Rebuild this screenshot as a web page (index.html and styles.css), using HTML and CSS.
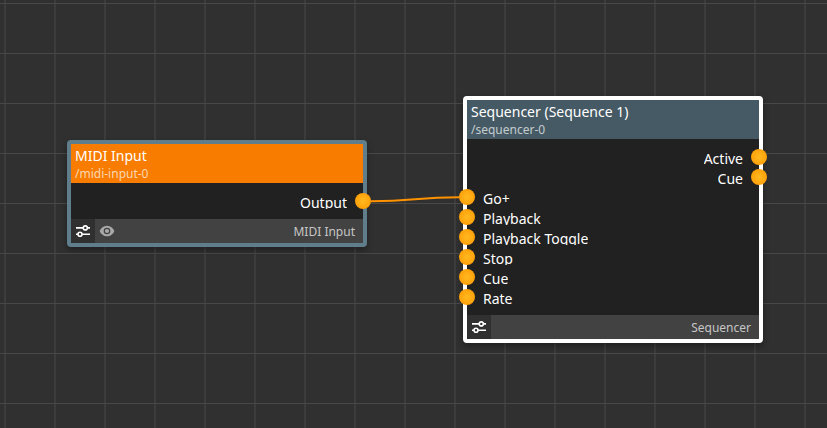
FILE: index.html
```
<!DOCTYPE html>
<html lang="en">
<head>
<meta charset="utf-8">
<title>Node editor</title>
<link rel="stylesheet" href="styles.css">
</head>
<body>
<svg class="symbols" aria-hidden="true">
  <symbol id="sliders" viewBox="0 0 16 16">
    <g fill="none" stroke="currentColor" stroke-width="1.600">
      <path d="M1 4.900h7M12.400 4.900H15M1 11.300h1.800M7.200 11.300H15"/>
      <circle cx="10.300" cy="4.900" r="2"/>
      <circle cx="5" cy="11.300" r="2"/>
    </g>
  </symbol>
  <symbol id="eye" viewBox="0 0 16 16">
    <path fill="currentColor" fill-rule="evenodd" d="M8 2.700C4.600 2.700 1.800 4.900.6 8c1.200 3.100 4 5.300 7.400 5.300s6.200-2.200 7.400-5.300C14.200 4.900 11.400 2.700 8 2.700zm0 8.600a3.300 3.300 0 1 1 0-6.600 3.300 3.300 0 0 1 0 6.600zM8 5.900a2.100 2.100 0 1 0 0 4.200 2.100 2.100 0 0 0 0-4.200z"/>
  </symbol>
</svg>
<main class="canvas">
  <section class="node midi">
    <header class="head">
      <div class="title">MIDI Input</div>
      <div class="path">/midi-input-0</div>
    </header>
    <div class="ports">
      <div class="port out"><span class="label">Output</span><i class="dot"></i></div>
    </div>
    <footer class="foot">
      <span class="tool settings"><svg><use href="#sliders"/></svg></span>
      <span class="tool view"><svg><use href="#eye"/></svg></span>
      <span class="type">MIDI Input</span>
    </footer>
  </section>
  <section class="node sequencer">
    <header class="head">
      <div class="title">Sequencer (Sequence 1)</div>
      <div class="path">/sequencer-0</div>
    </header>
    <div class="ports">
      <div class="port out"><span class="label">Active</span><i class="dot"></i></div>
      <div class="port out"><span class="label">Cue</span><i class="dot"></i></div>
      <div class="port"><i class="dot"></i><span class="label">Go+</span></div>
      <div class="port"><i class="dot"></i><span class="label">Playback</span></div>
      <div class="port"><i class="dot"></i><span class="label">Playback Toggle</span></div>
      <div class="port"><i class="dot"></i><span class="label">Stop</span></div>
      <div class="port"><i class="dot"></i><span class="label">Cue</span></div>
      <div class="port"><i class="dot"></i><span class="label">Rate</span></div>
    </div>
    <footer class="foot">
      <span class="tool settings"><svg><use href="#sliders"/></svg></span>
      <span class="type">Sequencer</span>
    </footer>
  </section>
  <svg class="wires" viewBox="0 0 827 428"><path d="M371 201.300C415 201.300 415 197.300 459 197.300"/></svg>
</main>
</body>
</html>
```
FILE: styles.css
```
* { box-sizing: border-box; }
body { margin: 0; overflow: hidden; font-family: "Noto Sans", sans-serif; }
.symbols { display: none; }
.canvas {
  position: relative;
  width: 827px;
  height: 428px;
  background-color: #303030;
  background-image:
    linear-gradient(#484848 1px, transparent 1px),
    linear-gradient(90deg, #3c3c3c 2px, transparent 2px);
  background-size: 50px 50px;
  background-position: 0 3px, 4px 0;
}
.node {
  position: absolute;
  width: 300px;
  border: 4px solid;
  border-radius: 4px;
  background: #212121;
  box-shadow: 0 3px 6px rgba(0, 0, 0, .35);
  color: #fff;
}
.midi { left: 67px; top: 140px; border-color: #607d8b; }
.sequencer { left: 463px; top: 96px; border-color: #fff; }
.head { height: 39px; padding: 2px 4px 0; }
.midi .head { background: #f77c00; }
.sequencer .head { background: #455a64; }
.title { height: 19px; font-size: 14px; line-height: 19px; }
.path { font-size: 12px; line-height: 18px; color: rgba(255, 255, 255, .7); }
.ports { padding: 8px 0; }
.port { display: flex; align-items: center; gap: 8px; height: 20px; margin: 0 -8px; }
.out { justify-content: flex-end; }
.label { height: 16px; overflow: hidden; font-size: 14px; line-height: 19px; }
.dot { width: 16px; height: 16px; border-radius: 50%; background: radial-gradient(circle, #ffb920, #ff9f08 75%); }
.foot { display: flex; align-items: center; height: 24px; background: #424242; color: #c6c6c6; }
.tool { display: flex; align-items: center; justify-content: center; width: 24px; height: 24px; }
.tool svg { width: 16px; height: 16px; }
.settings { background: #303030; color: #fff; }
.view { color: #a8a8a8; }
.type { margin-left: auto; padding: 2px 8px 0 0; font-size: 12px; line-height: 16px; }
.wires { position: absolute; inset: 0; width: 827px; height: 428px; fill: none; stroke: #ff9200; stroke-width: 2; }
```
